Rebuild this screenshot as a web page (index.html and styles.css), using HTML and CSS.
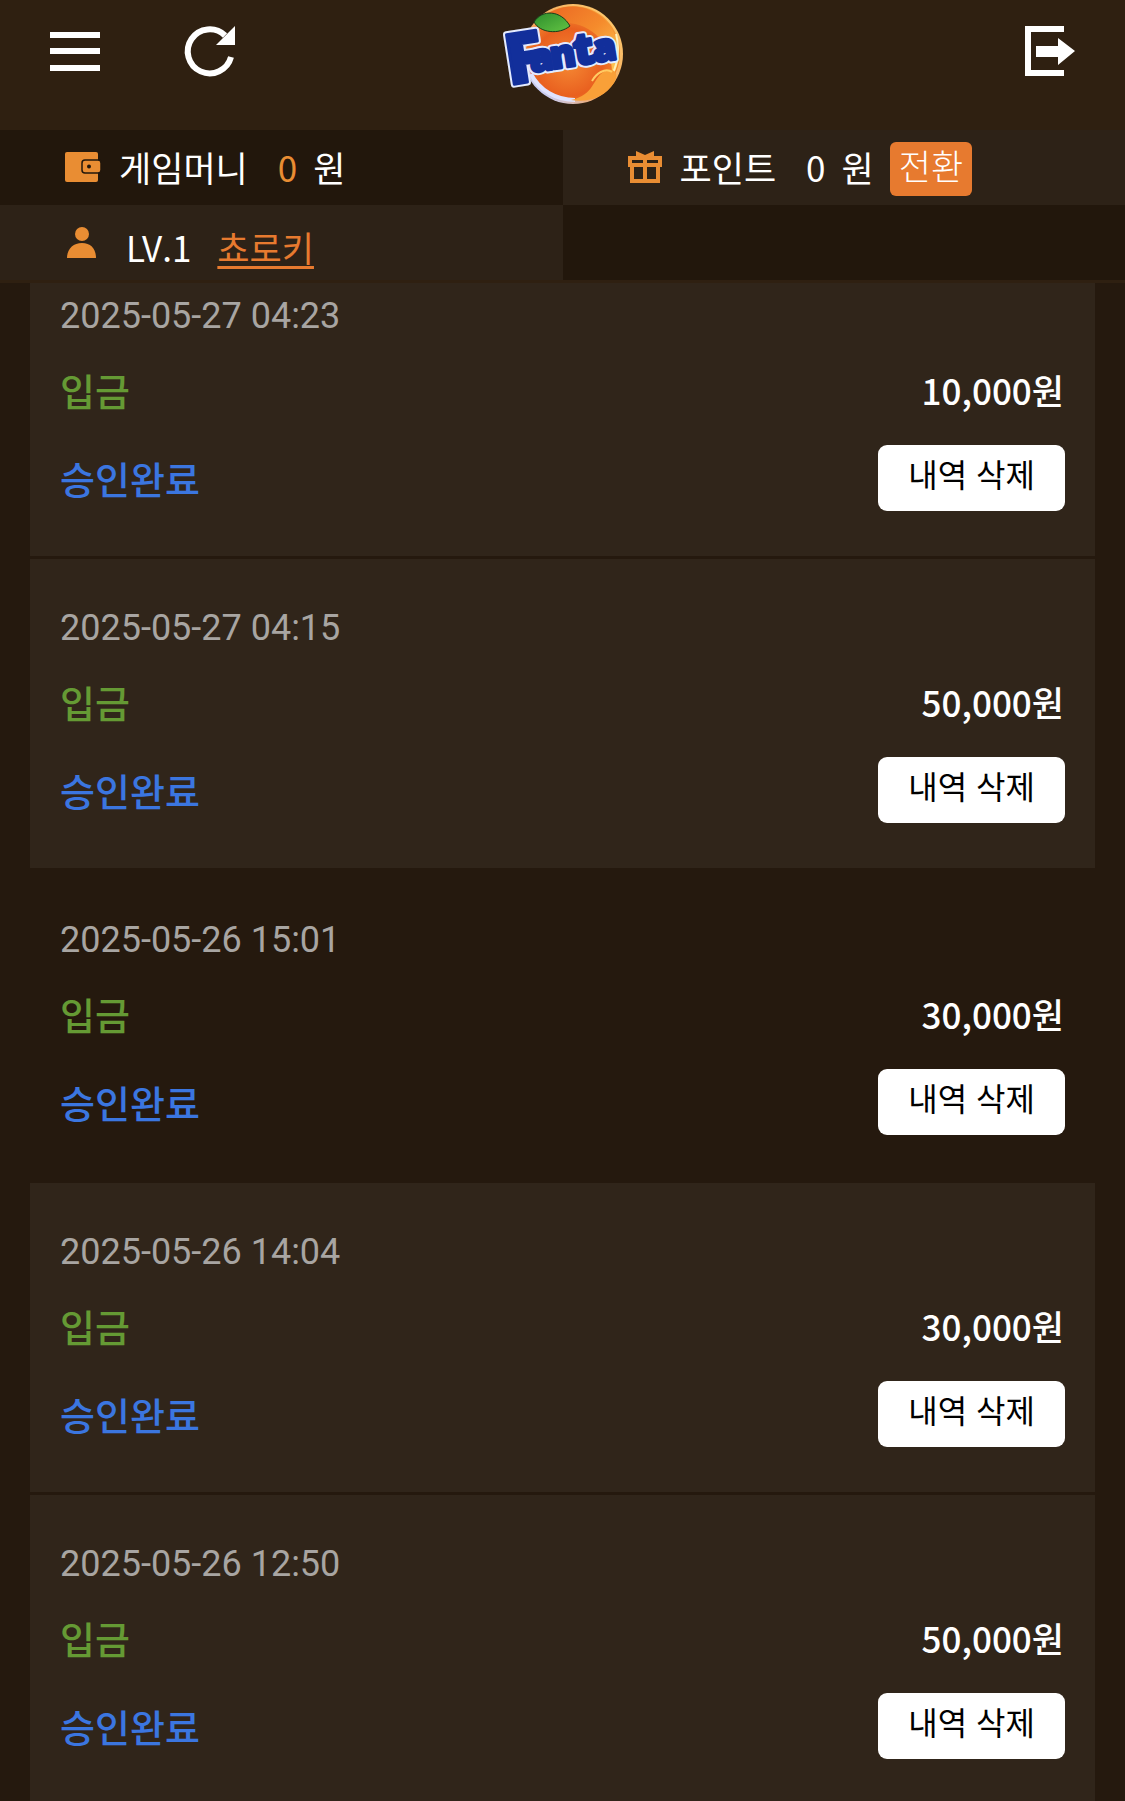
FILE: index.html
```
<!DOCTYPE html>
<html lang="ko">
  <head>
    <meta charset="UTF-8" />
    <meta name="viewport" content="width=device-width, initial-scale=1.0" />
    <title>입출금 내역</title>
    <link rel="stylesheet" href="styles.css">
  </head>
  <body>
    <header class="header">
      <nav class="topbar">
        <div class="left">
          <button class="iconBtn" type="button" aria-label="메뉴">
            <svg width="50" height="50" viewBox="0 0 50 50" fill="#fff">
              <path d="M0 6h50v6H0zM0 22h50v6H0zM0 39h50v6H0z" />
            </svg>
          </button>
          <button class="iconBtn" type="button" aria-label="새로고침">
            <svg width="50" height="50" viewBox="0 0 50 50">
              <path d="M46 31A22 22 0 1 1 40 9.500" fill="none" stroke="#fff" stroke-width="6" />
              <path d="M50 0v19H31z" fill="#fff" />
            </svg>
          </button>
        </div>
        <a class="logo" href="#" aria-label="Fanta">
          <svg width="120" height="104" viewBox="0 0 120 104">
            <defs>
              <radialGradient id="ball" cx="45%" cy="60%" r="60%">
                <stop offset="0" stop-color="#f58a34" />
                <stop offset="0.6" stop-color="#e9601f" />
                <stop offset="1" stop-color="#f59a35" />
              </radialGradient>
              <linearGradient id="rim" x1="1" y1="0" x2="0" y2="1">
                <stop offset="0" stop-color="#ffd071" />
                <stop offset="0.6" stop-color="#f3a35c" />
                <stop offset="0.85" stop-color="#c8cdf5" />
                <stop offset="1" stop-color="#3b4fc4" />
              </linearGradient>
              <linearGradient id="shine" x1="0" y1="0" x2="1" y2="1">
                <stop offset="0" stop-color="#ea6422" />
                <stop offset="0.5" stop-color="#f58b2c" />
                <stop offset="1" stop-color="#ffd05a" />
              </linearGradient>
              <linearGradient id="leaf" x1="0" y1="0" x2="1" y2="1">
                <stop offset="0" stop-color="#2d8d2c" />
                <stop offset="1" stop-color="#63c444" />
              </linearGradient>
            </defs>
            <circle cx="70" cy="52" r="50" fill="url(#rim)" />
            <circle cx="70" cy="51" r="47" fill="url(#ball)" />
            <path d="M37 18C58-4 99 0 113 35c5 14 3 30-4 40 2-30-19-56-50-54-10 0-17 4-22-3z" fill="url(#shine)" />
            <path d="M113 32c5 19 1 39-13 52" fill="none" stroke="#fff0b8" stroke-width="2" />
            <path d="M28 72c8 16 25 26 44 26" fill="none" stroke="#dfe3ff" stroke-width="4" />
            <path d="M68 98c24-5 21-22 34-29 9-4 15 3 9 12-9 14-25 20-43 17z" fill="#f9a038" />
            <path d="M89 79c4-7 13-14 20-9" fill="none" stroke="#ffcc63" stroke-width="2" />
            <g class="wordmark wordmarkEdge" transform="rotate(-9)">
              <text class="big" x="-7" y="83">F</text>
              <text y="74"><tspan x="17">a</tspan><tspan x="38">n</tspan><tspan class="tall" x="62">t</tspan><tspan x="81">a</tspan></text>
            </g>
            <g class="wordmark" transform="rotate(-9)" aria-hidden="true">
              <text class="big" x="-7" y="83">F</text>
              <text y="74"><tspan x="17">a</tspan><tspan x="38">n</tspan><tspan class="tall" x="62">t</tspan><tspan x="81">a</tspan></text>
            </g>
            <path d="M31 20c8-13 27-12 36 4-11 9-30 7-36-4z" fill="url(#leaf)" stroke="#193c1b" />
          </svg>
        </a>
        <button class="iconBtn logout" type="button" aria-label="로그아웃">
          <svg width="50" height="50" viewBox="0 0 50 50" fill="#fff">
            <path d="M0 0h39v6H6v38h33v6H0z" />
            <path d="M11 20h22v-8l17 13-17 14v-8H11z" />
          </svg>
        </button>
      </nav>
      <div class="userInfo">
        <div class="cell dark">
          <svg class="icon" width="36" height="32" viewBox="0 0 36 32">
            <rect x="0" y="1" width="33" height="30" rx="2" fill="#e98d33" />
            <rect x="17" y="9" width="19" height="13" rx="3" fill="#e98d33" stroke="#22170c" stroke-width="1.500" />
            <circle cx="24" cy="15.500" r="2" fill="#22170c" />
          </svg>
          <span class="label">게임머니</span>
          <span class="num orange">0</span>
          <span>원</span>
        </div>
        <div class="cell">
          <svg class="icon" width="34" height="32" viewBox="0 0 34 32" fill="none" stroke="#e98d33">
            <path d="M2 7h30v7H2zM4 14v16h26V14M17 7v23" stroke-width="4" />
            <path d="M8 0l9 4 9-4v6H8z" fill="#e98d33" stroke="none" />
          </svg>
          <span class="label">포인트</span>
          <span class="num">0</span>
          <span>원</span>
          <button class="change" type="button">전환</button>
        </div>
        <div class="cell level">
          <svg class="icon" width="36" height="32" viewBox="0 0 36 32" fill="#e98d33">
            <circle cx="17" cy="7" r="7" />
            <path d="M2 31c0-9 6-15 15-15s14 6 14 15z" />
          </svg>
          <span class="lv">LV.1</span>
          <a class="nick" href="#">쵸로키</a>
        </div>
        <div class="cell dark"></div>
      </div>
    </header>
    <main class="content">
      <ul class="history">
        <li>
          <time class="date">2025-05-27 04:23</time>
          <div class="row">
            <span class="type">입금</span>
            <span class="money">10,000원</span>
          </div>
          <div class="row state">
            <span class="done">승인완료</span>
            <button class="del" type="button">내역 삭제</button>
          </div>
        </li>
        <li>
          <time class="date">2025-05-27 04:15</time>
          <div class="row">
            <span class="type">입금</span>
            <span class="money">50,000원</span>
          </div>
          <div class="row state">
            <span class="done">승인완료</span>
            <button class="del" type="button">내역 삭제</button>
          </div>
        </li>
        <li class="plain">
          <time class="date">2025-05-26 15:01</time>
          <div class="row">
            <span class="type">입금</span>
            <span class="money">30,000원</span>
          </div>
          <div class="row state">
            <span class="done">승인완료</span>
            <button class="del" type="button">내역 삭제</button>
          </div>
        </li>
        <li>
          <time class="date">2025-05-26 14:04</time>
          <div class="row">
            <span class="type">입금</span>
            <span class="money">30,000원</span>
          </div>
          <div class="row state">
            <span class="done">승인완료</span>
            <button class="del" type="button">내역 삭제</button>
          </div>
        </li>
        <li>
          <time class="date">2025-05-26 12:50</time>
          <div class="row">
            <span class="type">입금</span>
            <span class="money">50,000원</span>
          </div>
          <div class="row state">
            <span class="done">승인완료</span>
            <button class="del" type="button">내역 삭제</button>
          </div>
        </li>
      </ul>
    </main>
  </body>
</html>
```

FILE: styles.css
```
* {
  margin: 0;
  padding: 0;
  box-sizing: border-box;
}
body {
  height: 100vh;
  display: flex;
  flex-direction: column;
  background-color: #25190e;
  color: #fff;
  font-family: "Noto Sans CJK KR", sans-serif;
  font-size: 35px;
}
ul {
  list-style: none;
}
button {
  border: none;
  background: none;
  font-family: inherit;
  cursor: pointer;
}
svg {
  display: block;
  overflow: visible;
}
.header {
  flex: none;
  background-color: #2f2011;
  padding-bottom: 3px;
}
.topbar {
  height: 130px;
  padding: 0 50px;
  display: grid;
  grid-template-columns: 1fr auto 1fr;
  align-items: start;
}
.left {
  display: flex;
  gap: 85px;
}
.iconBtn {
  margin-top: 26px;
}
.logo {
  margin-top: 2px;
}
.logout {
  justify-self: end;
}
.wordmark {
  font-family: "Open Sans", sans-serif;
  font-weight: 800;
  font-size: 38px;
  fill: #122f9b;
  stroke: #122f9b;
  stroke-width: 3px;
  stroke-linejoin: round;
}
.wordmark .big {
  font-size: 70px;
}
.wordmark .tall {
  font-size: 44px;
}
.wordmarkEdge {
  stroke: #e4ebff;
  stroke-width: 7px;
}
.userInfo {
  display: grid;
  grid-template-columns: 1fr 1fr;
}
.cell {
  height: 75px;
  padding: 0 0 2px 65px;
  display: flex;
  align-items: center;
  background-color: #2d2217;
  line-height: 50px;
}
.dark {
  background-color: #22170c;
}
.icon {
  flex: none;
  margin-right: 18px;
}
.label {
  margin-right: 30px;
}
.num {
  margin-right: 16px;
}
.orange {
  color: #e98d33;
}
.change {
  height: 54px;
  margin: 4px 0 0 16px;
  padding: 0 9px 8px;
  border-radius: 6px;
  background-color: #e77a2f;
  color: #fff;
  font-size: 35px;
  font-weight: 300;
  line-height: 46px;
}
.level {
  padding-top: 10px;
}
.level .icon {
  align-self: flex-start;
  margin-top: 12px;
}
.lv {
  margin: 0 26px 0 7px;
}
.nick {
  color: #e77a2f;
  text-decoration-thickness: 3px;
  text-underline-offset: 4px;
}
.content {
  flex: 1;
  min-height: 0;
  overflow: hidden;
  padding: 0 30px;
}
/* list is scrolled a little under the header */
.history {
  margin-top: -36px;
}
.history li {
  padding: 45px 30px;
  border-bottom: 3px solid #25190e;
  background-color: #30251a;
}
.history .plain {
  background-color: #25190e;
}
.date {
  display: block;
  color: #a8a5a2;
  font-family: Roboto, sans-serif;
  font-size: 36px;
  line-height: 48px;
}
.row {
  display: flex;
  justify-content: space-between;
  align-items: center;
  margin-top: 24px;
  font-weight: 500;
  line-height: 52px;
}
.state {
  margin-top: 29px;
}
.type,
.done {
  font-size: 38px;
}
.type {
  color: #659a34;
}
.done {
  color: #3b76e0;
}
.money {
  margin-right: 1px;
}
.del {
  height: 66px;
  padding: 0 30px 10px;
  border-radius: 9px;
  background-color: #fff;
  color: #000;
  font-size: 32px;
  line-height: 56px;
}
```
